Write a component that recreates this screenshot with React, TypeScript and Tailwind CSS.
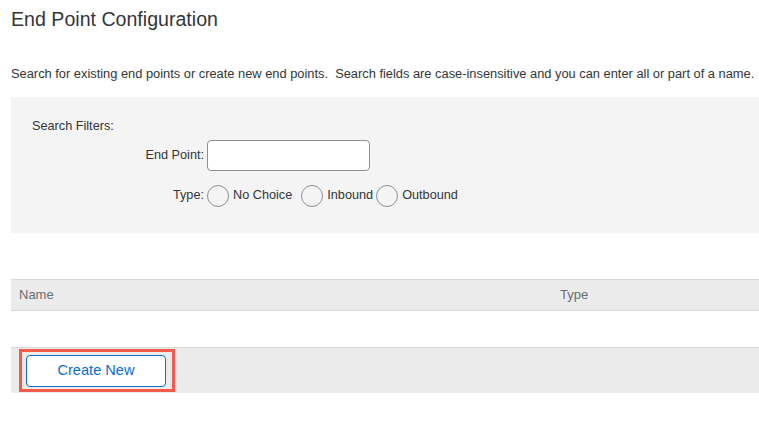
const FONT = "font-['Liberation_Sans',Arial,sans-serif]";

function Radio({ label }: { label: string }) {
  return (
    <label className="flex items-center gap-[4px]">
      <span className="h-[22px] w-[22px] rounded-full border border-[#89919a]" />
      <span>{label}</span>
    </label>
  );
}

export default function App() {
  return (
    <div className={`min-h-screen bg-white text-[#32363a] ${FONT}`}>
      <div className="pl-[11px]">
        <h1 className="pt-[8px] text-[19.6px] leading-[22px]">End Point Configuration</h1>
        <p className="mt-[36px] text-[12.85px] leading-[15px] whitespace-nowrap">
          Search for existing end points or create new end points.&nbsp; Search fields are case-insensitive and you can enter all or part of a name.
        </p>

        {/* Search filters */}
        <div className="mt-[16px] h-[136px] bg-[#f4f4f4] pl-[21px] pt-[22px] text-[12.7px]">
          <div className="leading-[15px]">Search Filters:</div>
          <div className="mt-[6px] flex items-center">
            <span className="w-[172px] text-right">End Point:</span>
            <input className="ml-[3px] h-[31px] w-[163px] rounded-[4px] border border-[#89919a] bg-white px-2 outline-none" />
          </div>
          <div className="mt-[14px] flex items-center">
            <span className="w-[172px] text-right">Type:</span>
            <div className="ml-[3px] flex items-center gap-[9px]">
              <Radio label="No Choice" />
              <div className="flex items-center gap-[3px]">
                <Radio label="Inbound" />
                <Radio label="Outbound" />
              </div>
            </div>
          </div>
        </div>

        {/* Results table */}
        <div className="mt-[46px]">
          <div className="flex h-[32px] items-center border-y border-[#d9d9d9] bg-[#ebebeb] text-[13px] text-[#6a6d70]">
            <div className="w-[541px] pl-[8px]">Name</div>
            <div className="pl-[8px]">Type</div>
          </div>
          <div className="h-[36px]" />
          <div className="border-t border-[#d9d9d9] bg-[#ebebeb] pl-[15px] pt-[7px] pb-[6px]">
            <div className="relative w-[140px]">
              <button className="h-[32px] w-[140px] rounded-[4px] border border-[#0a6ed1] bg-white text-[14.6px] text-[#0a6ed1]">
                Create New
              </button>
              <div className="pointer-events-none absolute -left-[7px] -right-[9px] -top-[6px] -bottom-[5px] border-[3px] border-[#f45b4b]" />
            </div>
          </div>
        </div>
      </div>
    </div>
  );
}
